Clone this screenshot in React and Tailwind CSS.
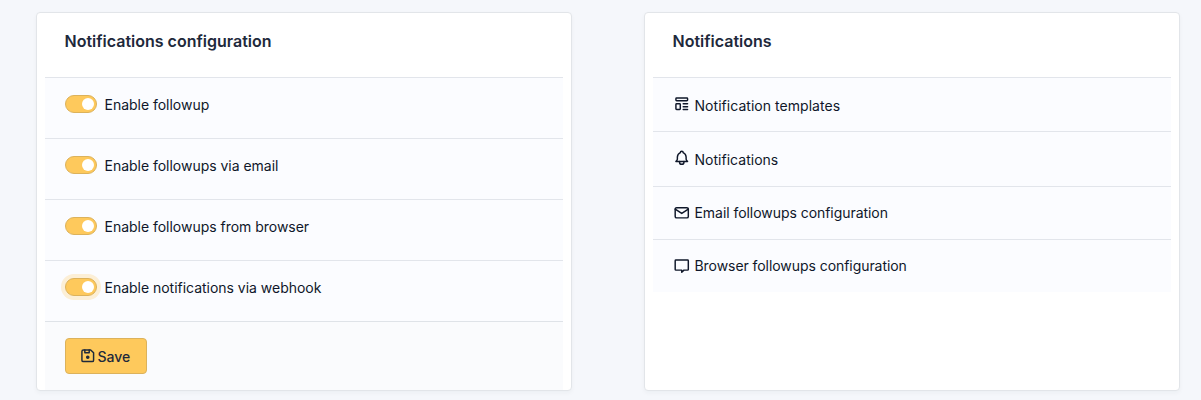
import React from "react";

function Icon({ children, className = "" }) {
  return (
    <svg
      viewBox="0 0 24 24"
      fill="none"
      stroke="currentColor"
      strokeWidth="2"
      strokeLinecap="round"
      strokeLinejoin="round"
      className={`size-[17.5px] shrink-0 ${className}`}
    >
      {children}
    </svg>
  );
}

function Card({ title, children }) {
  return (
    <section className="h-[379px] w-[536px] rounded-[4px] border border-[#e2e5e9] bg-white px-2 shadow-[0_2px_4px_rgba(30,41,59,0.04)]">
      <h2 className="h-16 pl-[19.5px] pt-4 text-[16px] leading-6 font-semibold text-[#1e293b]">{title}</h2>
      {children}
    </section>
  );
}

function Toggle({ label, focused }) {
  return (
    <label className="flex h-[61px] border-t border-[#e2e5eb] bg-[#fbfcff] pt-[17px] pl-5">
      <span
        className={`flex h-[18px] w-8 items-center justify-end rounded-full border border-[#dcb25b] bg-[#fec95c] pr-[2px] ${
          focused ? "shadow-[0_0_0_4px_rgba(254,201,92,0.25)]" : ""
        }`}
      >
        <span className="size-3 rounded-full bg-white" />
      </span>
      <span className="ml-[7.5px] leading-5 tracking-[-0.02px]">{label}</span>
    </label>
  );
}

const links = [
  {
    label: "Notification templates",
    height: "h-[54px] pt-[17px]",
    text: "mt-px tracking-[0.04px]",
    icon: (
      <>
        <rect x="4" y="4" width="16" height="4" rx="1" />
        <rect x="4" y="12" width="6" height="8" rx="1" />
        <path d="M14 12h6M14 16h6M14 20h6" />
      </>
    ),
  },
  {
    label: "Notifications",
    height: "h-[55px] pt-[17px]",
    text: "mt-px tracking-[0.02px]",
    icon: (
      <>
        <path d="M10 5a2 2 0 0 1 4 0a7 7 0 0 1 4 6v3a4 4 0 0 0 2 3h-16a4 4 0 0 0 2 -3v-3a7 7 0 0 1 4 -6" />
        <path d="M9 17v1a3 3 0 0 0 6 0v-1" />
      </>
    ),
  },
  {
    label: "Email followups configuration",
    height: "h-[53px] pt-4",
    shift: "mt-[1px]",
    text: "tracking-[-0.05px]",
    icon: (
      <>
        <rect x="3" y="5" width="18" height="14" rx="2" />
        <path d="M3 7l9 6l9 -6" />
      </>
    ),
  },
  {
    label: "Browser followups configuration",
    height: "h-[53px] pt-4",
    shift: "mt-[0.5px]",
    text: "tracking-[-0.06px]",
    icon: (
      <path d="M4 4h16a1 1 0 0 1 1 1v12a1 1 0 0 1 -1 1h-5l-3 3v-3h-8a1 1 0 0 1 -1 -1v-12a1 1 0 0 1 1 -1" />
    ),
  },
];

export default function App() {
  return (
    <main className="flex h-[400px] w-[1201px] gap-[72px] overflow-hidden bg-[#f5f7fb] pt-3 pl-9 font-['Inter',sans-serif] text-[14px] leading-5 text-[#0f172a]">
      <Card title="Notifications configuration">
        <Toggle label="Enable followup" />
        <Toggle label="Enable followups via email" />
        <Toggle label="Enable followups from browser" />
        <Toggle label="Enable notifications via webhook" focused />
        <div className="h-[69px] border-t border-[#dfe3e8] bg-[#fafbfd] pt-4 pl-5">
          <button className="flex h-9 w-[82px] items-center rounded-[4px] border border-[#dcb25b] bg-[#fec95c] pl-[13px] font-medium text-[#1e293b]">
            <Icon>
              <path d="M6 4h10l4 4v10a2 2 0 0 1 -2 2h-12a2 2 0 0 1 -2 -2v-12a2 2 0 0 1 2 -2" />
              <circle cx="12" cy="14" r="1.5" fill="currentColor" />
              <path d="M14 4v4h-6v-4" />
            </Icon>
            <span className="mt-[2px] ml-[1px]">Save</span>
          </button>
        </div>
      </Card>
      <Card title="Notifications">
        {links.map((item) => (
          <a key={item.label} className={`flex border-t border-[#e2e5eb] bg-[#fbfcff] pl-5 ${item.height}`}>
            <Icon className={item.shift}>{item.icon}</Icon>
            <span className={`ml-1 ${item.text}`}>{item.label}</span>
          </a>
        ))}
      </Card>
    </main>
  );
}
